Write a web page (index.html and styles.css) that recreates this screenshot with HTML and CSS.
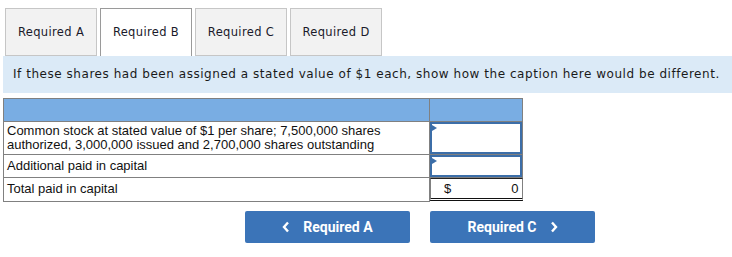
FILE: index.html
```html
<!DOCTYPE html>
<html lang="en">
<head>
    <meta charset="UTF-8">
    <meta name="viewport" content="width=device-width, initial-scale=1.0">
    <title>Required B</title>
    <link rel="stylesheet" href="styles.css">
</head>
<body>

<div class="tabs">
    <div class="tab">Required A</div>
    <div class="tab active">Required B</div>
    <div class="tab">Required C</div>
    <div class="tab">Required D</div>
</div>

<div class="instructions">
    If these shares had been assigned a stated value of $1 each, show how the caption here would be different.
</div>

<table class="caption-table">
    <thead>
        <tr>
            <th class="label-col"></th>
            <th class="value-col"></th>
        </tr>
    </thead>
    <tbody>
        <tr class="row-tall">
            <td class="label">Common stock at stated value of $1 per share; 7,500,000 shares<br>authorized, 3,000,000 issued and 2,700,000 shares outstanding</td>
            <td class="value"><div class="input-box"><span class="marker"></span></div></td>
        </tr>
        <tr>
            <td class="label">Additional paid in capital</td>
            <td class="value"><div class="input-box"><span class="marker"></span></div></td>
        </tr>
        <tr>
            <td class="label">Total paid in capital</td>
            <td class="value total"><span>$</span><span>0</span></td>
        </tr>
    </tbody>
</table>

<div class="nav-buttons">
    <button class="nav-btn">
        <svg width="8" height="12" viewBox="0 0 8 12"><polyline points="6,1.5 2,6 6,10.5" fill="none" stroke="white" stroke-width="2.4"/></svg>
        <span>Required A</span>
    </button>
    <button class="nav-btn">
        <span>Required C</span>
        <svg width="8" height="12" viewBox="0 0 8 12"><polyline points="2,1.5 6,6 2,10.5" fill="none" stroke="white" stroke-width="2.4"/></svg>
    </button>
</div>

</body>
</html>
```

FILE: styles.css
```css
body {
    margin: 0;
    padding: 0;
    background-color: white;
    font-family: "Liberation Sans", Arial, sans-serif;
    color: #222;
}
.tabs {
    display: flex;
    gap: 3px;
    padding: 8px 0 0 5px;
}
.tab {
    width: 90px;
    height: 46px;
    line-height: 47px;
    text-align: center;
    background-color: #f2f2f2;
    border: 1px solid #c6c6c6;
    font-family: "DejaVu Sans", Verdana, sans-serif;
    font-size: 11.5px;
    letter-spacing: 0.35px;
    color: #1a1a2a;
}
.tab.active {
    background-color: white;
    border-color: #9a9a9a;
    border-bottom: none;
    height: 47px;
}
.instructions {
    margin-left: 3px;
    height: 37px;
    line-height: 37px;
    padding-left: 10px;
    background-color: #dbeaf7;
    font-family: "DejaVu Sans", Verdana, sans-serif;
    font-size: 12px;
    letter-spacing: 0.54px;
    color: #1a1a1a;
    white-space: nowrap;
}
.caption-table {
    margin: 5px 0 0 3px;
    border-collapse: collapse;
    font-size: 13px;
    color: #111;
}
.caption-table th {
    background-color: #79ade3;
    height: 22px;
    border: 1px solid #808080;
    padding: 0;
}
.label-col {
    width: 425px;
}
.value-col {
    width: 92px;
}
.caption-table td {
    border: 1px solid #808080;
    padding: 0;
    height: 22px;
}
.caption-table .label {
    padding: 0 3px;
    line-height: 14px;
}
.row-tall td {
    height: 32px;
}
.input-box {
    position: relative;
    box-sizing: border-box;
    height: 100%;
    min-height: 22px;
    border: 2px solid #3c6ea8;
    background-color: white;
}
.row-tall .input-box {
    height: 32px;
}
.marker {
    position: absolute;
    top: 1px;
    left: 0;
    border-top: 3px solid transparent;
    border-bottom: 3px solid transparent;
    border-left: 5px solid #3c6ea8;
}
.value.total {
    border-top: 1px solid #222;
    border-bottom: 3px double #111;
    display: flex;
    justify-content: space-between;
    align-items: center;
    padding: 0 3px 0 13px;
    height: 19px;
}
.nav-buttons {
    display: flex;
    gap: 20px;
    padding-left: 245px;
    margin-top: 9px;
}
.nav-btn {
    width: 165px;
    height: 32px;
    display: flex;
    align-items: center;
    justify-content: center;
    gap: 13px;
    background-color: #3b74b8;
    color: white;
    border: none;
    border-radius: 2px;
    font-family: Roboto, "Liberation Sans", sans-serif;
    font-weight: bold;
    font-size: 14px;
    cursor: pointer;
}
```
